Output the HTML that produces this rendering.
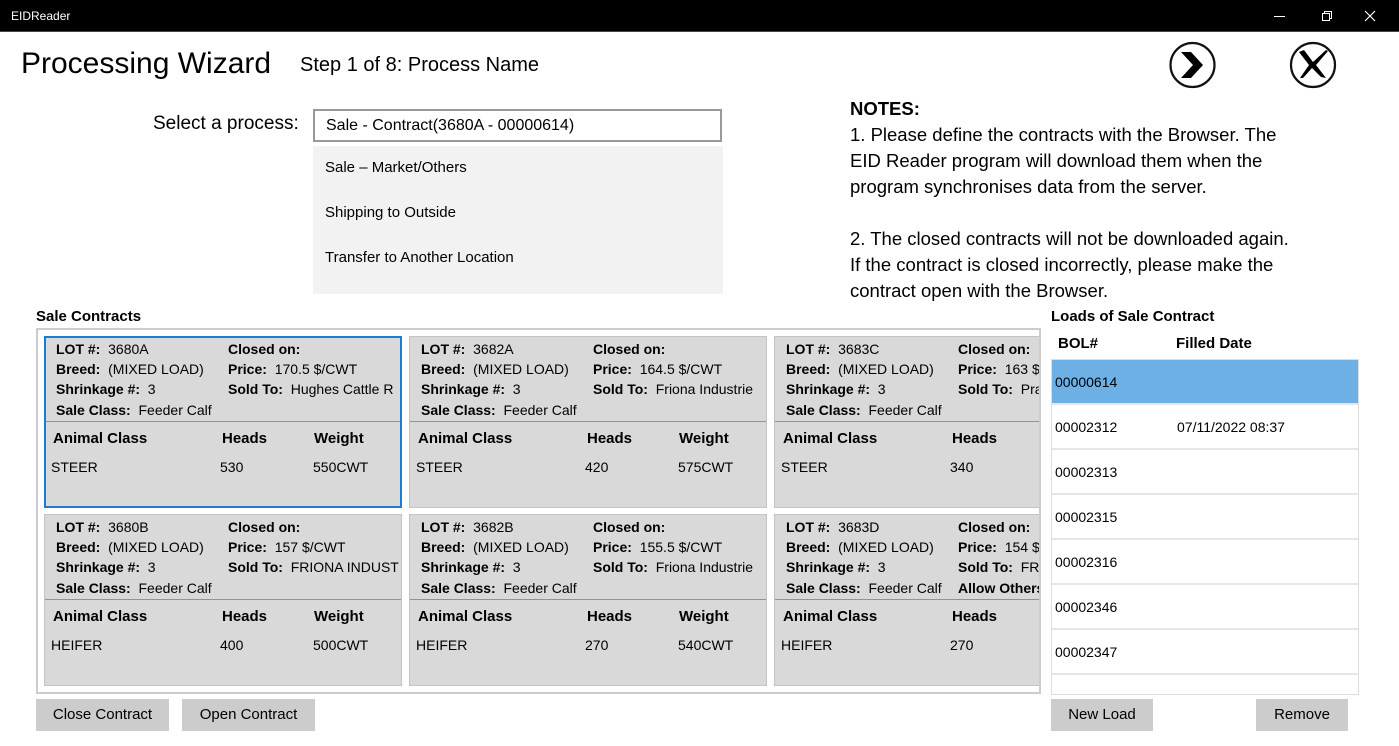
<!DOCTYPE html>
<html><head><meta charset="utf-8"><style>
*{margin:0;padding:0;box-sizing:border-box}
body{width:1399px;height:746px;background:#fff;font-family:"Liberation Sans",sans-serif;color:#000;position:relative;overflow:hidden}
.a{position:absolute;white-space:nowrap}
.tb{left:0;top:0;width:1399px;height:32px;background:#000;border-bottom:1px solid #444}
.card{position:absolute;width:358px;height:172px;background:#d9d9d9;border:1px solid #c4c4c4;overflow:hidden;font-size:14px}
.card .a{line-height:20px}
.card b{font-weight:bold}
.sep{position:absolute;left:0;right:0;top:84px;height:1px;background:#8a8fb5}
.hd{font-weight:bold;font-size:15px}
.row{position:absolute;left:0;width:306px;height:45px;border-bottom:2px solid #e6e6e6;font-size:14px;line-height:45px}
.btn{position:absolute;background:#ccc;font-size:15px;text-align:center;line-height:32px;height:32px}
</style></head><body>
<div class="a tb"></div>
<div class="a" style="left:11px;top:9px;color:#fff;font-size:12px">EIDReader</div>
<div class="a" style="left:1274px;top:16px;width:11px;height:1px;background:#fff"></div>
<svg class="a" style="left:1321px;top:10px" width="12" height="12"><rect x="1.5" y="3.5" width="7" height="7" fill="none" stroke="#fff"/><path d="M3.5 3.5V1.5H10.5V8.5H8.5" fill="none" stroke="#fff"/></svg>
<svg class="a" style="left:1364px;top:10px" width="12" height="12"><path d="M1 1L11 11M11 1L1 11" stroke="#fff" stroke-width="1.2"/></svg>

<div class="a" style="left:21px;top:47px;font-size:30px">Processing Wizard</div>
<div class="a" style="left:300px;top:54px;font-size:20px">Step 1 of 8: Process Name</div>

<svg class="a" style="left:1168px;top:40px" width="50" height="50"><circle cx="24.5" cy="25" r="22" fill="none" stroke="#111" stroke-width="2.2"/><path d="M13 12H23L35 25L23 38H13L25 25Z" fill="#000"/></svg>
<svg class="a" style="left:1288px;top:40px" width="50" height="50"><circle cx="25" cy="25" r="22" fill="none" stroke="#111" stroke-width="2.2"/><path d="M11 12L16 10L25 22L38 10L40 11L28 25L38 38L33 37L24 28L15 38L12 38L21 25Z" fill="#000"/></svg>

<div class="a" style="left:153px;top:113px;font-size:19px">Select a process:</div>
<div class="a" style="left:313px;top:109px;width:409px;height:33px;border:2px solid #999;font-size:16px;line-height:29px;padding-left:11px">Sale - Contract(3680A - 00000614)</div>
<div class="a" style="left:313px;top:146px;width:410px;height:148px;background:#f2f2f2;font-size:15px">
<div class="a" style="left:12px;top:13px">Sale – Market/Others</div>
<div class="a" style="left:12px;top:58px">Shipping to Outside</div>
<div class="a" style="left:12px;top:103px">Transfer to Another Location</div>
</div>

<div class="a" style="left:850px;top:96px;font-size:18.5px;line-height:26px">
<b>NOTES:</b><br>1. Please define the contracts with the Browser. The<br>EID Reader program will download them when the<br>program synchronises data from the server.<br><br>2. The closed contracts will not be downloaded again.<br>If the contract is closed incorrectly, please make the<br>contract open with the Browser.</div>

<div class="a" style="left:36px;top:308px;font-size:15px;font-weight:bold">Sale Contracts</div>
<div class="a" style="left:36px;top:328px;width:1005px;height:366px;border:2px solid #ccc;overflow:hidden">

<div class="card" style="left:6px;top:6px;border:2px solid #1e7bd2">
<div class="a" style="left:10px;top:1px"><b>LOT #:</b>&nbsp; 3680A</div>
<div class="a" style="left:10px;top:21px"><b>Breed:</b>&nbsp; (MIXED LOAD)</div>
<div class="a" style="left:10px;top:41px"><b>Shrinkage #:</b>&nbsp; 3</div>
<div class="a" style="left:10px;top:62px"><b>Sale Class:</b>&nbsp; Feeder Calf</div>
<div class="a" style="left:182px;top:1px"><b>Closed on:</b></div>
<div class="a" style="left:182px;top:21px"><b>Price:</b>&nbsp; 170.5 $/CWT</div>
<div class="a" style="left:182px;top:41px"><b>Sold To:</b>&nbsp; Hughes Cattle R</div>
<div class="sep" style="top:83px"></div>
<div class="a hd" style="left:7px;top:91px">Animal Class</div><div class="a hd" style="left:176px;top:91px">Heads</div><div class="a hd" style="left:268px;top:91px">Weight</div>
<div class="a" style="left:5px;top:119px">STEER</div><div class="a" style="left:174px;top:119px">530</div><div class="a" style="left:267px;top:119px">550CWT</div>
</div>

<div class="card" style="left:371px;top:6px">
<div class="a" style="left:11px;top:2px"><b>LOT #:</b>&nbsp; 3682A</div>
<div class="a" style="left:11px;top:22px"><b>Breed:</b>&nbsp; (MIXED LOAD)</div>
<div class="a" style="left:11px;top:42px"><b>Shrinkage #:</b>&nbsp; 3</div>
<div class="a" style="left:11px;top:63px"><b>Sale Class:</b>&nbsp; Feeder Calf</div>
<div class="a" style="left:183px;top:2px"><b>Closed on:</b></div>
<div class="a" style="left:183px;top:22px"><b>Price:</b>&nbsp; 164.5 $/CWT</div>
<div class="a" style="left:183px;top:42px"><b>Sold To:</b>&nbsp; Friona Industrie</div>
<div class="sep"></div>
<div class="a hd" style="left:8px;top:92px">Animal Class</div><div class="a hd" style="left:177px;top:92px">Heads</div><div class="a hd" style="left:269px;top:92px">Weight</div>
<div class="a" style="left:6px;top:120px">STEER</div><div class="a" style="left:175px;top:120px">420</div><div class="a" style="left:268px;top:120px">575CWT</div>
</div>

<div class="card" style="left:736px;top:6px">
<div class="a" style="left:11px;top:2px"><b>LOT #:</b>&nbsp; 3683C</div>
<div class="a" style="left:11px;top:22px"><b>Breed:</b>&nbsp; (MIXED LOAD)</div>
<div class="a" style="left:11px;top:42px"><b>Shrinkage #:</b>&nbsp; 3</div>
<div class="a" style="left:11px;top:63px"><b>Sale Class:</b>&nbsp; Feeder Calf</div>
<div class="a" style="left:183px;top:2px"><b>Closed on:</b></div>
<div class="a" style="left:183px;top:22px"><b>Price:</b>&nbsp; 163 $/CWT</div>
<div class="a" style="left:183px;top:42px"><b>Sold To:</b>&nbsp; Pratt</div>
<div class="sep"></div>
<div class="a hd" style="left:8px;top:92px">Animal Class</div><div class="a hd" style="left:177px;top:92px">Heads</div><div class="a hd" style="left:269px;top:92px">Weight</div>
<div class="a" style="left:6px;top:120px">STEER</div><div class="a" style="left:175px;top:120px">340</div>
</div>

<div class="card" style="left:6px;top:184px">
<div class="a" style="left:11px;top:2px"><b>LOT #:</b>&nbsp; 3680B</div>
<div class="a" style="left:11px;top:22px"><b>Breed:</b>&nbsp; (MIXED LOAD)</div>
<div class="a" style="left:11px;top:42px"><b>Shrinkage #:</b>&nbsp; 3</div>
<div class="a" style="left:11px;top:63px"><b>Sale Class:</b>&nbsp; Feeder Calf</div>
<div class="a" style="left:183px;top:2px"><b>Closed on:</b></div>
<div class="a" style="left:183px;top:22px"><b>Price:</b>&nbsp; 157 $/CWT</div>
<div class="a" style="left:183px;top:42px"><b>Sold To:</b>&nbsp; FRIONA INDUST</div>
<div class="sep"></div>
<div class="a hd" style="left:8px;top:92px">Animal Class</div><div class="a hd" style="left:177px;top:92px">Heads</div><div class="a hd" style="left:269px;top:92px">Weight</div>
<div class="a" style="left:6px;top:120px">HEIFER</div><div class="a" style="left:175px;top:120px">400</div><div class="a" style="left:268px;top:120px">500CWT</div>
</div>

<div class="card" style="left:371px;top:184px">
<div class="a" style="left:11px;top:2px"><b>LOT #:</b>&nbsp; 3682B</div>
<div class="a" style="left:11px;top:22px"><b>Breed:</b>&nbsp; (MIXED LOAD)</div>
<div class="a" style="left:11px;top:42px"><b>Shrinkage #:</b>&nbsp; 3</div>
<div class="a" style="left:11px;top:63px"><b>Sale Class:</b>&nbsp; Feeder Calf</div>
<div class="a" style="left:183px;top:2px"><b>Closed on:</b></div>
<div class="a" style="left:183px;top:22px"><b>Price:</b>&nbsp; 155.5 $/CWT</div>
<div class="a" style="left:183px;top:42px"><b>Sold To:</b>&nbsp; Friona Industrie</div>
<div class="sep"></div>
<div class="a hd" style="left:8px;top:92px">Animal Class</div><div class="a hd" style="left:177px;top:92px">Heads</div><div class="a hd" style="left:269px;top:92px">Weight</div>
<div class="a" style="left:6px;top:120px">HEIFER</div><div class="a" style="left:175px;top:120px">270</div><div class="a" style="left:268px;top:120px">540CWT</div>
</div>

<div class="card" style="left:736px;top:184px">
<div class="a" style="left:11px;top:2px"><b>LOT #:</b>&nbsp; 3683D</div>
<div class="a" style="left:11px;top:22px"><b>Breed:</b>&nbsp; (MIXED LOAD)</div>
<div class="a" style="left:11px;top:42px"><b>Shrinkage #:</b>&nbsp; 3</div>
<div class="a" style="left:11px;top:63px"><b>Sale Class:</b>&nbsp; Feeder Calf</div>
<div class="a" style="left:183px;top:2px"><b>Closed on:</b></div>
<div class="a" style="left:183px;top:22px"><b>Price:</b>&nbsp; 154 $/CWT</div>
<div class="a" style="left:183px;top:42px"><b>Sold To:</b>&nbsp; FRIONA</div>
<div class="a" style="left:183px;top:63px"><b>Allow Others</b></div>
<div class="sep"></div>
<div class="a hd" style="left:8px;top:92px">Animal Class</div><div class="a hd" style="left:177px;top:92px">Heads</div><div class="a hd" style="left:269px;top:92px">Weight</div>
<div class="a" style="left:6px;top:120px">HEIFER</div><div class="a" style="left:175px;top:120px">270</div>
</div>
</div>

<div class="btn" style="left:36px;top:699px;width:133px">Close Contract</div>
<div class="btn" style="left:182px;top:699px;width:133px">Open Contract</div>

<div class="a" style="left:1051px;top:308px;font-size:15px;font-weight:bold">Loads of Sale Contract</div>
<div class="a" style="left:1058px;top:335px;font-size:15px;font-weight:bold">BOL#</div>
<div class="a" style="left:1176px;top:335px;font-size:15px;font-weight:bold">Filled Date</div>
<div class="a" style="left:1051px;top:359px;width:308px;height:336px;border:1px solid #ddd;overflow:hidden">
<div class="row" style="top:0;background:#6cb0e6;padding-left:3px">00000614</div>
<div class="row" style="top:45px;padding-left:3px">00002312<span style="position:absolute;left:125px">07/11/2022 08:37</span></div>
<div class="row" style="top:90px;padding-left:3px">00002313</div>
<div class="row" style="top:135px;padding-left:3px">00002315</div>
<div class="row" style="top:180px;padding-left:3px">00002316</div>
<div class="row" style="top:225px;padding-left:3px">00002346</div>
<div class="row" style="top:270px;padding-left:3px">00002347</div>
</div>
<div class="btn" style="left:1051px;top:699px;width:102px">New Load</div>
<div class="btn" style="left:1256px;top:699px;width:92px">Remove</div>
</body></html>
